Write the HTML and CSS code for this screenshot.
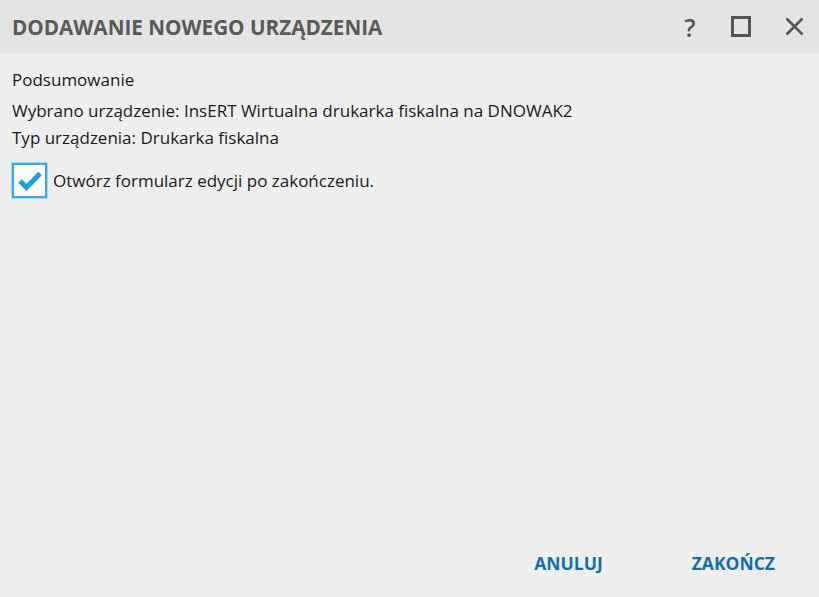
FILE: index.html
```html
<!DOCTYPE html>
<html lang="pl">
<head>
<meta charset="utf-8">
<link rel="stylesheet" href="styles.css">
</head>
<body>
<div class="dialog">
  <header class="titlebar">
    <h1 class="title">DODAWANIE NOWEGO URZĄDZENIA</h1>
    <div class="controls">
      <span class="ctl help">?</span>
      <span class="ctl max">
        <svg width="20" height="21" viewBox="0 0 20 21"><rect x="1.5" y="1.5" width="17" height="18" fill="none" stroke="#555" stroke-width="3"/></svg>
      </span>
      <span class="ctl close">
        <svg width="19" height="19" viewBox="0 0 19 19"><path d="M1.5 1.5 L17.5 17.5 M17.5 1.5 L1.5 17.5" stroke="#555" stroke-width="2.6" fill="none"/></svg>
      </span>
    </div>
  </header>
  <main class="content">
    <p class="line heading">Podsumowanie</p>
    <p class="line">Wybrano urządzenie: InsERT Wirtualna drukarka fiskalna na DNOWAK2</p>
    <p class="line">Typ urządzenia: Drukarka fiskalna</p>
    <label class="check">
      <span class="box">
        <svg width="24" height="20" viewBox="0 0 24 20"><path d="M2 10 L8.5 16.5 L22 2.5" fill="none" stroke="#1a9fdf" stroke-width="5"/></svg>
      </span>
      <span class="check-label">Otwórz formularz edycji po zakończeniu.</span>
    </label>
  </main>
  <footer class="buttons">
    <button class="btn">ANULUJ</button>
    <button class="btn">ZAKOŃCZ</button>
  </footer>
</div>
</body>
</html>
```
FILE: styles.css
```css
html, body {
  margin: 0;
  padding: 0;
  background: #eeeeee;
}
.dialog {
  width: 819px;
  height: 597px;
  display: flex;
  flex-direction: column;
  font-family: "Open Sans", "Noto Sans", sans-serif;
  color: #1a1a1a;
}
.titlebar {
  height: 53px;
  flex: none;
  background: #e4e4e4;
  display: flex;
  align-items: center;
  justify-content: space-between;
  padding: 0 15px 0 12px;
  box-sizing: border-box;
}
.title {
  margin: 0;
  font-size: 20.7px;
  font-weight: 700;
  color: #5a5a5a;
}
.controls {
  display: flex;
  align-items: center;
}
.ctl {
  display: flex;
  justify-content: center;
  align-items: center;
}
.help {
  width: 12px;
  font-size: 25px;
  font-weight: 600;
  color: #555;
  line-height: 20px;
  margin-right: 35px;
}
.max { margin-right: 34px; }
.content {
  flex: 1;
  padding: 13px 12px 0 12px;
  box-sizing: border-box;
}
.line {
  margin: 0;
  font-size: 17px;
  line-height: 27px;
}
.heading { margin-bottom: 4px; }
.check {
  display: flex;
  align-items: center;
  margin-top: 12px;
  gap: 6px;
}
.box {
  width: 31px;
  height: 31px;
  border: 2px solid #3aa8e6;
  box-shadow: 0 0 0 1px #a9d9f3;
  background: #ffffff;
  display: flex;
  align-items: center;
  justify-content: center;
}
.check-label {
  font-size: 17px;
}
.buttons {
  display: flex;
  justify-content: flex-end;
  gap: 89px;
  padding: 0 44px 22px 0;
}
.btn {
  border: 0;
  background: none;
  padding: 0;
  font-family: "Open Sans", "Noto Sans", sans-serif;
  font-weight: 700;
  font-size: 17.5px;
  color: #1070ad;
}
```
